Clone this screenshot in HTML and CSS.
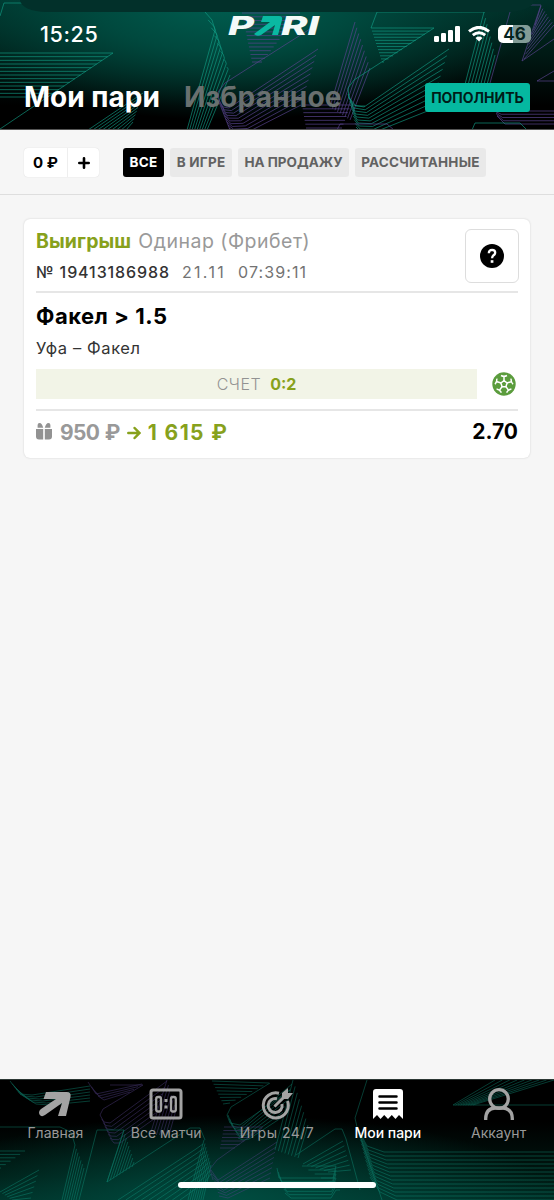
FILE: index.html
```
<!DOCTYPE html>
<html lang="ru">
<head>
<meta charset="utf-8">
<title>Мои пари</title>
<link rel="stylesheet" href="styles.css">
</head>
<body>
<div class="app">
  <header class="header">
    <svg class="pattern" id="pattern-top" viewBox="0 0 554 129"></svg>
    <div class="sheet-edge"></div>
    <div class="status">
      <span class="time">15:25</span>
      <svg class="logo" width="96" height="40" viewBox="0 -10 96 40" aria-label="PARI">
        <text class="logo-text" x="1" y="20" textLength="26" lengthAdjust="spacingAndGlyphs">P</text>
        <path d="M36 1H52Q56 1 55 5L51 20H45L48 10L34 20Q30 22 27 19L43 7H34Z" fill="#0ab9a2"/>
        <text class="logo-text" x="54" y="20" textLength="38" lengthAdjust="spacingAndGlyphs">RI</text>
      </svg>
      <div class="indicators">
        <svg width="26" height="16" viewBox="0 0 26 16" fill="#fff"><rect y="10" width="5" height="6" rx="1.3"/><rect x="7" y="7" width="5" height="9" rx="1.3"/><rect x="14" y="4" width="5" height="12" rx="1.3"/><rect x="21" width="5" height="16" rx="1.3"/></svg>
        <svg width="22" height="16" viewBox="0 0 22 16" fill="none" stroke="#fff" stroke-width="3"><path d="M1 5.4Q11-2.7 21 5.4M4.8 9.2Q11 4.2 17.200 9.200"/><path d="M7.500 12Q11 9.200 14.500 12L11 15.500Z" fill="#fff" stroke="none"/></svg>
        <span class="battery">46</span>
      </div>
    </div>
    <div class="titlebar">
      <h1 class="title">Мои пари</h1>
      <span class="title-muted">Избранное</span>
      <button class="deposit">ПОПОЛНИТЬ</button>
    </div>
  </header>

  <nav class="filters">
    <div class="balance"><span class="amount">0 ₽</span><span class="add"><svg width="12" height="12" viewBox="0 0 12 12" stroke="#000" stroke-width="2.600" stroke-linecap="round"><path d="M6 1.300V10.700M1.300 6H10.700"/></svg></span></div>
    <span class="chip chip-on">ВСЕ</span>
    <span class="chip chip-game">В ИГРЕ</span>
    <span class="chip chip-sale">НА ПРОДАЖУ</span>
    <span class="chip chip-done">РАССЧИТАННЫЕ</span>
  </nav>

  <main class="content">
    <article class="card">
      <div class="card-head">
        <div>
          <div class="kind"><b class="won">Выигрыш</b><span class="single">Одинар (Фрибет)</span></div>
          <div class="meta"><span class="number">№ 19413186988</span><span class="date">21.11</span><span class="clock">07:39:11</span></div>
        </div>
        <div class="help"><svg width="24" height="24" viewBox="0 0 24 24"><circle cx="12" cy="12" r="12"/><path d="M8.800 9.200Q8.900 5.800 12.100 5.800Q15.200 5.900 15.200 8.700Q15.200 10.200 13.600 11.300Q12.100 12.300 12.100 14.300" fill="none" stroke="#fff" stroke-width="2.300"/><rect x="10.700" y="16.200" width="2.700" height="2.600" fill="#fff"/></svg></div>
      </div>
      <div class="pick">Факел &gt; 1.5</div>
      <div class="teams">Уфа – Факел</div>
      <div class="score-row">
        <div class="score"><span class="score-label">СЧЕТ</span><b class="score-value">0:2</b></div>
        <svg width="24" height="24" viewBox="0 0 24 24"><circle cx="12" cy="12" r="11.700" fill="#5b9c3d"/><g stroke="#fff" stroke-width="1.500" fill="none"><path id="seam" d="M12 9V4M9 3.500Q12 5 15 3.500"/><use href="#seam" transform="rotate(72 12 12)"/><use href="#seam" transform="rotate(144 12 12)"/><use href="#seam" transform="rotate(216 12 12)"/><use href="#seam" transform="rotate(288 12 12)"/><path d="M12 8.700L15.100 11L13.900 14.700H10.100L8.900 11Z"/></g></svg>
      </div>
      <div class="payout">
        <svg class="gift" width="16" height="17" viewBox="0 0 16 17" fill="#929292"><path d="M0 6H7.200V16.500H3Q0 16.500 0 13.500ZM8.800 6H16V13.500Q16 16.500 13 16.500H8.800ZM1.600 4.800V2Q1.600 0 3.600 0Q6 0 7.200 4.800ZM8.800 4.800Q10 0 12.400 0Q14.400 0 14.400 2V4.800Z"/></svg>
        <span class="stake">950 ₽</span>
        <svg class="arrow" width="14" height="14" viewBox="0 0 14 14" fill="none" stroke="#87a11c" stroke-width="2.500" stroke-linecap="round"><path d="M1.300 7H12M7.600 2L12.400 7L7.600 12"/></svg>
        <span class="win">1 615 ₽</span>
        <span class="odds">2.70</span>
      </div>
    </article>
  </main>

  <footer class="footer">
    <svg class="pattern" id="pattern-bottom" viewBox="0 1080 554 120"></svg>
    <nav class="tabs">
      <div class="tab"><svg width="34" height="32" viewBox="0 0 34 32"><path d="M8 4H28.500Q33.500 4 32.500 9L28 28H20L24 15L7 27Q3.500 29.500 1.500 26.500Q0 23.500 3 21L18 11H5.500Z" fill="#a3a3a3"/></svg><span class="tab-home">Главная</span></div>
      <div class="tab"><svg width="34" height="32" viewBox="0 0 34 32" fill="none" stroke="#a3a3a3" stroke-width="2.300"><rect x="2" y="2" width="30" height="28" rx="2" stroke-width="3"/><rect x="7.200" y="9" width="4.800" height="14.500" rx="2"/><rect x="22" y="9" width="4.800" height="14.500" rx="2"/><path d="M17 11V14M17 17.500V20.500" stroke-width="3"/></svg><span class="tab-all">Все матчи</span></div>
      <div class="tab"><svg width="34" height="32" viewBox="0 0 34 32" fill="none" stroke="#a3a3a3" stroke-width="3"><path d="M19 5.300A12.500 12.500 0 1 0 27.500 13"/><path d="M17 10.800A7 7 0 1 0 22 16"/><path d="M14.500 18.500L24 9"/><path d="M22 10V5L28 0V5H33L28 11H23Z" fill="#a3a3a3" stroke="none"/></svg><span class="tab-games">Игры 24/7</span></div>
      <div class="tab tab-on"><svg width="34" height="32" viewBox="0 0 34 32"><path d="M5 1H29Q32 1 32 4V31L28 27L24.500 31L20.800 27L17 31L13.200 27L9.500 31L6 27L2 31V4Q2 1 5 1Z" fill="#fff"/><path d="M8.500 8.500H25.500M8.500 14.500H25.500M8.500 20.500H25.500" stroke="#000" stroke-width="2.500" stroke-linecap="round"/></svg><span class="tab-bets">Мои пари</span></div>
      <div class="tab"><svg width="34" height="32" viewBox="0 0 34 32" fill="none" stroke="#a3a3a3" stroke-width="3.300"><circle cx="17" cy="11" r="9.300"/><path d="M3.700 32V30.500Q4 20.500 13 20H21Q30 20.500 30.300 30.500V32"/></svg><span class="tab-account">Аккаунт</span></div>
    </nav>
    <div class="home-indicator"></div>
  </footer>
</div>
<script src="pattern.js"></script>
</body>
</html>
```
FILE: styles.css
```
* { box-sizing: border-box; }
body { margin: 0; background: #f6f6f6; color: #000; font-family: Inter, "Open Sans", sans-serif; white-space: nowrap; }
.app { width: 554px; height: 1200px; display: flex; flex-direction: column; overflow: hidden; }
.header { height: 130px; position: relative; overflow: hidden; background: radial-gradient(ellipse 320px 120px at 225px 0, #005f51 0%, #00493e 42%, transparent 100%), linear-gradient(#002f28, #001813 45%, #000 82%); border-bottom: 1px solid #555; }
.pattern { position: absolute; inset: 0; width: 100%; height: 100%; }
.pattern polyline { fill: none; stroke-width: 0.900; }
.teal { stroke: #12a088; opacity: .7; }
.violet { stroke: #5a4490; opacity: .75; }
.footer .pattern { opacity: .6; }
.sheet-edge { position: absolute; top: 0; left: 20px; right: 20px; height: 12px; background: #02302a; border-radius: 0 0 26px 26px / 0 0 12px 12px; }
.status { position: relative; height: 68px; padding: 12px 23px 0 40px; display: grid; grid-template-columns: 187px 1fr auto; }
.time { margin-top: 9px; font-size: 21.500px; line-height: 26px; font-weight: 500; letter-spacing: .6px; color: #fff; }
.logo { margin-top: -7px; }
.logo-text { font: italic 800 26px Inter, sans-serif; fill: #f4faf8; }
.indicators { display: flex; align-items: flex-start; gap: 8px; margin-top: 14px; height: 20px; }
.battery { width: 33px; height: 18px; margin-top: -1px; border-radius: 5px; background: linear-gradient(90deg, #fff 46%, #829b96 46%); color: #05231f; font-size: 17px; line-height: 18px; font-weight: 700; text-align: center; }
.titlebar { position: relative; display: flex; height: 58px; align-items: center; padding: 0 24px; }
.title, .title-muted { margin: 0; font-size: 28px; line-height: 32px; font-weight: 700; color: #fff; }
.title { width: 160px; }
.title-muted { color: #69706f; letter-spacing: .2px; }
.deposit { margin: 0 0 0 auto; border: 0; padding: 0; width: 105px; height: 29px; border-radius: 3px; background: #05b8a0; color: #001c18; font: 700 14px Inter, sans-serif; }
.filters { height: 65px; padding: 18px 24px; display: flex; gap: 6px; align-items: flex-start; border-bottom: 1px solid #dedede; }
.balance { display: flex; width: 75px; height: 29px; background: #fff; border-radius: 4px; box-shadow: 0 0 1px #ccc; margin-right: 18px; }
.amount { width: 44px; border-right: 1px solid #eee; text-align: center; font-size: 15px; line-height: 29px; font-weight: 700; }
.add { flex: 1; display: flex; align-items: center; justify-content: center; }
.chip { height: 29px; border-radius: 3px; background: #e9e9e9; color: #626262; text-align: center; font-size: 13.500px; line-height: 29px; font-weight: 700; letter-spacing: .25px; }
.chip-on { width: 41px; background: #000; color: #fff; }
.chip-game { width: 62px; }
.chip-sale { width: 111px; letter-spacing: 0; }
.chip-done { width: 131px; }
.content { flex: 1; padding: 24px 24px 0; }
.card { height: 239px; background: #fff; border-radius: 6px; box-shadow: 0 0 2px #ccc; padding: 0 12px; }
.card-head { height: 74px; border-bottom: 2px solid #e6e6e6; display: flex; justify-content: space-between; }
.kind { margin-top: 9px; line-height: 26px; font-size: 19.500px; }
.won { color: #87a11c; margin-right: 7px; letter-spacing: .1px; }
.single { color: #999; letter-spacing: .5px; }
.meta { margin-top: 6px; line-height: 24px; font-size: 16px; color: #737373; }
.number { color: #333; font-weight: 500; letter-spacing: .9px; margin-right: 12px; }
.date { letter-spacing: 2.300px; margin-right: 11px; }
.clock { margin-left: 1px; letter-spacing: 1.100px; }
.help { width: 54px; height: 54px; margin: 10px -1px 0 0; border: 1px solid #ddd; border-radius: 6px; display: grid; place-items: center; }
.pick { margin-top: 9px; height: 28px; line-height: 28px; font-size: 22px; font-weight: 700; letter-spacing: .5px; }
.teams { margin-top: 7px; height: 22px; line-height: 22px; font-size: 16.500px; letter-spacing: .6px; color: #333; }
.score-row { display: flex; align-items: center; justify-content: space-between; margin-top: 10px; padding-right: 2px; }
.score { width: 441px; height: 30px; background: #f2f4e7; display: flex; justify-content: center; gap: 9px; line-height: 30px; font-size: 16px; }
.score-label { color: #929292; font-weight: 300; letter-spacing: .5px; }
.score-value { color: #87a11c; }
.payout { display: flex; align-items: center; height: 46px; margin-top: 10px; border-top: 2px solid #e6e6e6; font-size: 21px; font-weight: 700; line-height: 28px; }
.gift { margin-top: -4px; }
.stake { color: #999; margin-left: 8px; letter-spacing: -.6px; word-spacing: 1px; }
.arrow { margin: 0 7px 0 7px; }
.win { color: #87a11c; letter-spacing: 1.400px; }
.odds { margin: -3px 0 0 auto; }
.footer { height: 121px; position: relative; border-top: 1px solid #2c3734; background: radial-gradient(ellipse 330px 85px at 230px 120px, #004c40 0%, transparent 100%), linear-gradient(#000 35%, #001711 80%, #002b23); }
.tabs { position: relative; display: grid; grid-template-columns: repeat(5, 1fr); padding-top: 8px; }
.tab { display: flex; flex-direction: column; align-items: center; color: #999; font-size: 14px; line-height: 20px; gap: 3px; }
.tab-on { color: #fff; font-weight: 500; }
.tab-games { letter-spacing: .5px; }
.home-indicator { position: relative; width: 198px; height: 6px; margin: 39px auto 0; border-radius: 3px; background: #fff; }
```
FILE: pattern.js
```
// Each family blends one polyline into another over a number of strokes.
const families = {
  "pattern-top": [
    ["teal", [0,53,113,53], [0,97,48,97], 13],
    ["teal", [113,53,0,129], null, 1],
    ["teal", [0,16,4,3,24,3], null, 1],
    ["teal", [88,130,143,93], [126,130,133,122], 9],
    ["teal", [205,12,212,20,215,30,187,130], [230,75,230,75,230,75,207,130], 9],
    ["violet", [242,13,300,13], [252,62,262,62], 14],
    ["violet", [310,29,225,83,218,92,219,102,230,130], null, 1],
    ["violet", [219,100,223,107,229,108,318,49], [229,128,235,132,250,131,301,105], 10],
    ["violet", [355,22,330,107], [370,68,350,120], 9],
    ["violet", [302,105,351,105], [306,128,342,128], 7],
    ["teal", [371,28,377,12,485,12], null, 1],
    ["teal", [371,28,434,28], [382,62,384,62], 12],
    ["teal", [434,28,354,80,348,88,349,98,356,106,365,106], null, 1],
    ["teal", [348,94,353,105,364,107,449,49], [356,127,361,132,375,132,430,110], 10],
    ["teal", [484,12,463,92], [495,55,485,92], 8],
    ["violet", [510,12,490,83], null, 1],
    ["violet", [527,5,541,5,522,61,554,39], null, 1],
    ["violet", [535,25,541,6], [524,59,554,25], 8],
    ["violet", [554,71,537,81,554,81], null, 1],
    ["violet", [495,110,500,111,554,111], [497,116,505,124,554,124], 5],
    ["violet", [337,130,340,124,387,124,394,130], null, 1],
    ["teal", [472,130,475,123,520,123,527,130], null, 1]
  ],
  "pattern-bottom": [
    ["violet", [88,1082,96,1094,142,1084], [98,1096,104,1100,130,1092], 4],
    ["violet", [100,1115,103,1109,143,1085,110,1085], null, 1],
    ["violet", [100,1115,104,1122,110,1123,167,1081], [110,1138,114,1143,120,1143,154,1119], 7],
    ["violet", [167,1080,150,1135], [176,1110,169,1135], 7],
    ["teal", [10,1081,20,1094,32,1095,90,1086], [20,1094,36,1104,50,1105,90,1101], 6],
    ["teal", [0,1127,60,1127,71,1132,75,1145], null, 1],
    ["teal", [75,1145,62,1200], [84,1168,76,1200], 7],
    ["teal", [0,1151,25,1151], [0,1168,1,1168], 6],
    ["teal", [0,1192,39,1170], [12,1200,31,1198], 6],
    ["teal", [79,1200,97,1130,124,1130,107,1182,190,1128,200,1128,205,1140], null, 1],
    ["teal", [124,1130,107,1182], [134,1162,132,1167], 9],
    ["teal", [118,1200,196,1149,203,1144], [180,1200,205,1182,211,1174], 9],
    ["teal", [204,1140,188,1200], [211,1165,203,1200], 8],
    ["teal", [212,1081,269,1083], [223,1104,230,1103], 8],
    ["teal", [270,1083,231,1107,227,1115,230,1123,240,1125,290,1090], null, 1],
    ["teal", [228,1115,232,1126,240,1128,292,1084], [238,1138,243,1140,249,1139,281,1118], 7],
    ["violet", [224,1127,263,1127], [220,1148,235,1148], 7],
    ["violet", [262,1128,217,1160,210,1169,213,1180], null, 1],
    ["violet", [211,1170,218,1180,277,1142], [219,1196,228,1198,270,1178], 8],
    ["teal", [293,1080,275,1150], [308,1125,298,1158], 8],
    ["teal", [296,1155,335,1129,342,1129,346,1139,360,1190], null, 1],
    ["teal", [303,1164,343,1141], [328,1172,351,1170], 7],
    ["teal", [277,1168,279,1178,333,1178,336,1166,302,1166], [285,1193,291,1198,331,1198,336,1190,340,1190], 7],
    ["teal", [367,1080,355,1118,357,1127,382,1200], null, 1],
    ["teal", [357,1127,367,1146,384,1152,554,1152], [370,1177,380,1192,397,1200,554,1200], 13],
    ["teal", [453,1105,495,1080], [473,1105,554,1080], 9],
    ["teal", [453,1105,554,1105], null, 1]
  ]
};
for (const [id, list] of Object.entries(families)) {
  const svg = document.getElementById(id);
  for (const [tone, from, to, count] of list) {
    for (let i = 0; i < count; i++) {
      const t = count > 1 ? i / (count - 1) : 0;
      const line = document.createElementNS("http://www.w3.org/2000/svg", "polyline");
      line.setAttribute("points", from.map((v, k) => to ? v + (to[k] - v) * t : v).join(" "));
      line.setAttribute("class", tone);
      svg.append(line);
    }
  }
}
```
